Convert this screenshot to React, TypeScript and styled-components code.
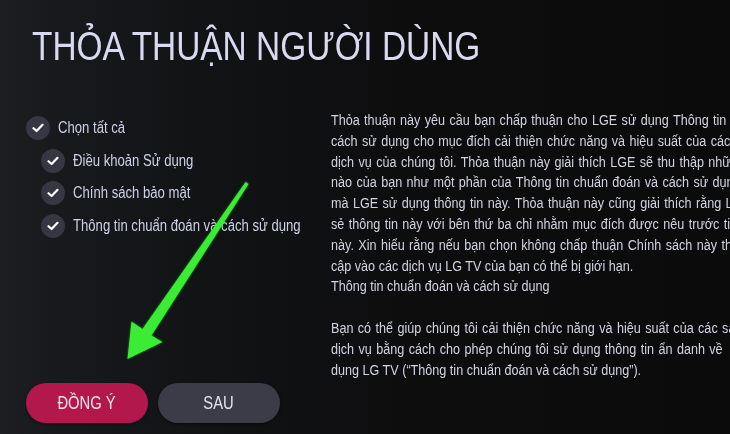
import React from "react"
import styled, { createGlobalStyle } from "styled-components"

const GlobalStyle = createGlobalStyle`
  html, body {
    margin: 0;
    padding: 0;
    background: #0e0e10;
    overflow: hidden;
  }
  * { box-sizing: border-box; }
`

// the TV font is a narrow grotesque; Liberation Sans squeezed horizontally
const FONT = `"Liberation Sans Narrow", "Liberation Sans", Arial, sans-serif`

const Screen = styled.div`
  position: relative;
  width: 730px;
  height: 434px;
  overflow: hidden;
  padding: 24px 0 0 32px;
  font-family: ${FONT};
  background: linear-gradient(
    to right,
    #1d1e21 0px,
    #18191c 60px,
    #121315 200px,
    #0d0d0e 420px,
    #0b0b0c 100%
  );
`

const Title = styled.h1`
  display: inline-block;
  margin: 0;
  font-family: ${FONT};
  font-weight: normal;
  font-size: 41px;
  line-height: 44px;
  color: #d9daf0;
  white-space: nowrap;
  transform: scaleX(0.815);
  transform-origin: left center;
`

const Body = styled.div`
  display: grid;
  grid-template-columns: 299px 1fr;
  margin-top: 42px;
  height: 324px;
`

const LeftColumn = styled.div`
  display: flex;
  flex-direction: column;
  justify-content: space-between;
  margin-left: -6px;
`

const CheckList = styled.ul`
  list-style: none;
  margin: 6px 0 0;
  padding: 0;
  display: flex;
  flex-direction: column;
  gap: 8.5px;
`

const CheckItem = styled.li<{ $indent?: boolean }>`
  display: flex;
  align-items: center;
  gap: 8px;
  padding-left: ${(p) => (p.$indent ? "15px" : "0")};
  font-size: 16px;
  color: #cfd0ea;
  white-space: nowrap;
  height: 24px;
`

const Label = styled.span`
  display: inline-block;
  transform: scaleX(0.82);
  transform-origin: left center;
`

const CheckCircle = styled.span`
  flex: none;
  display: flex;
  align-items: center;
  justify-content: center;
  width: 24px;
  height: 24px;
  border-radius: 50%;
  background: #363743;
`

const Buttons = styled.div`
  display: flex;
  gap: 10px;
  margin-bottom: 11px;
`

const Button = styled.button<{ $primary?: boolean }>`
  width: 122px;
  height: 40px;
  border: none;
  border-radius: 20px;
  font-family: ${FONT};
  font-size: 18px;
  color: ${(p) => (p.$primary ? "#f3e6ee" : "#e4e4f2")};
  background: ${(p) => (p.$primary ? "#b2184c" : "#3b3c48")};
  box-shadow: 0 1px 3px rgba(0, 0, 0, 0.5);
  cursor: pointer;
`

const ButtonText = styled.span`
  display: inline-block;
  transform: scaleX(0.82);
`

const Agreement = styled.div`
  font-size: 14px;
  line-height: 20.8px;
  color: #d3d4e2;
  white-space: nowrap;
  transform: scaleX(0.9);
  transform-origin: left top;
`

// lines inside a paragraph are justified on the TV, so they run wider
const Line = styled.div<{ $full?: boolean }>`
  height: 20.8px;
  word-spacing: ${(p) => (p.$full ? "1px" : "0")};
`

const Arrow = styled.svg`
  position: absolute;
  left: 0;
  top: 0;
  pointer-events: none;
`

const Check = () => (
  <CheckCircle>
    <svg width="12" height="10" viewBox="0 0 12 10">
      <path
        d="M1.5 5.2 L4.6 8 L10.5 1.8"
        fill="none"
        stroke="#ffffff"
        strokeWidth="2.2"
        strokeLinecap="round"
        strokeLinejoin="round"
      />
    </svg>
  </CheckCircle>
)

const items = [
  { label: "Chọn tất cả", indent: false },
  { label: "Điều khoản Sử dụng", indent: true },
  { label: "Chính sách bảo mật", indent: true },
  { label: "Thông tin chuẩn đoán và cách sử dụng", indent: true },
]

const paragraphs = [
  [
    "Thỏa thuận này yêu cầu bạn chấp thuận cho LGE sử dụng Thông tin",
    "cách sử dụng cho mục đích cải thiện chức năng và hiệu suất của các",
    "dịch vụ của chúng tôi. Thỏa thuận này giải thích LGE sẽ thu thập những",
    "nào của bạn như một phần của Thông tin chuẩn đoán và cách sử dụng",
    "mà LGE sử dụng thông tin này. Thỏa thuận này cũng giải thích rằng LGE",
    "sẻ thông tin này với bên thứ ba chỉ nhằm mục đích được nêu trước tiên",
    "này. Xin hiểu rằng nếu bạn chọn không chấp thuận Chính sách này thì",
    "cập vào các dịch vụ LG TV của bạn có thể bị giới hạn.",
    "Thông tin chuẩn đoán và cách sử dụng",
  ],
  [
    "Bạn có thể giúp chúng tôi cải thiện chức năng và hiệu suất của các sản",
    "dịch vụ bằng cách cho phép chúng tôi sử dụng thông tin ẩn danh về",
    "dụng LG TV (“Thông tin chuẩn đoán và cách sử dụng”).",
  ],
]

// number of lines per paragraph that run into the right edge
const fullLines = [7, 2]

export default function App() {
  return (
    <>
      <GlobalStyle />
      <Screen>
        <Title>THỎA THUẬN NGƯỜI DÙNG</Title>
        <Body>
          <LeftColumn>
            <CheckList>
              {items.map((it) => (
                <CheckItem key={it.label} $indent={it.indent}>
                  <Check />
                  <Label>{it.label}</Label>
                </CheckItem>
              ))}
            </CheckList>
            <Buttons>
              <Button $primary>
                <ButtonText>ĐỒNG Ý</ButtonText>
              </Button>
              <Button>
                <ButtonText>SAU</ButtonText>
              </Button>
            </Buttons>
          </LeftColumn>
          <Agreement>
            {paragraphs.map((p, i) => (
              <React.Fragment key={i}>
                {i > 0 && <Line />}
                {p.map((l, j) => (
                  <Line key={l} $full={j < fullLines[i]}>
                    {l}
                  </Line>
                ))}
              </React.Fragment>
            ))}
          </Agreement>
        </Body>
        <Arrow width="730" height="434" viewBox="0 0 730 434">
          <defs>
            <filter id="glow" x="-20%" y="-20%" width="140%" height="140%">
              <feGaussianBlur stdDeviation="1.2" />
            </filter>
          </defs>
          <polygon
            points="245.6,182 248.6,184 151.5,335.5 162.5,342 127.5,359 131.5,321.5 142.5,329"
            fill="#2ad62a"
            filter="url(#glow)"
            opacity="0.7"
          />
          <polygon
            points="245.6,182 248.6,184 151.5,335.5 162.5,342 127.5,359 131.5,321.5 142.5,329"
            fill="#3bec35"
          />
        </Arrow>
      </Screen>
    </>
  )
}
